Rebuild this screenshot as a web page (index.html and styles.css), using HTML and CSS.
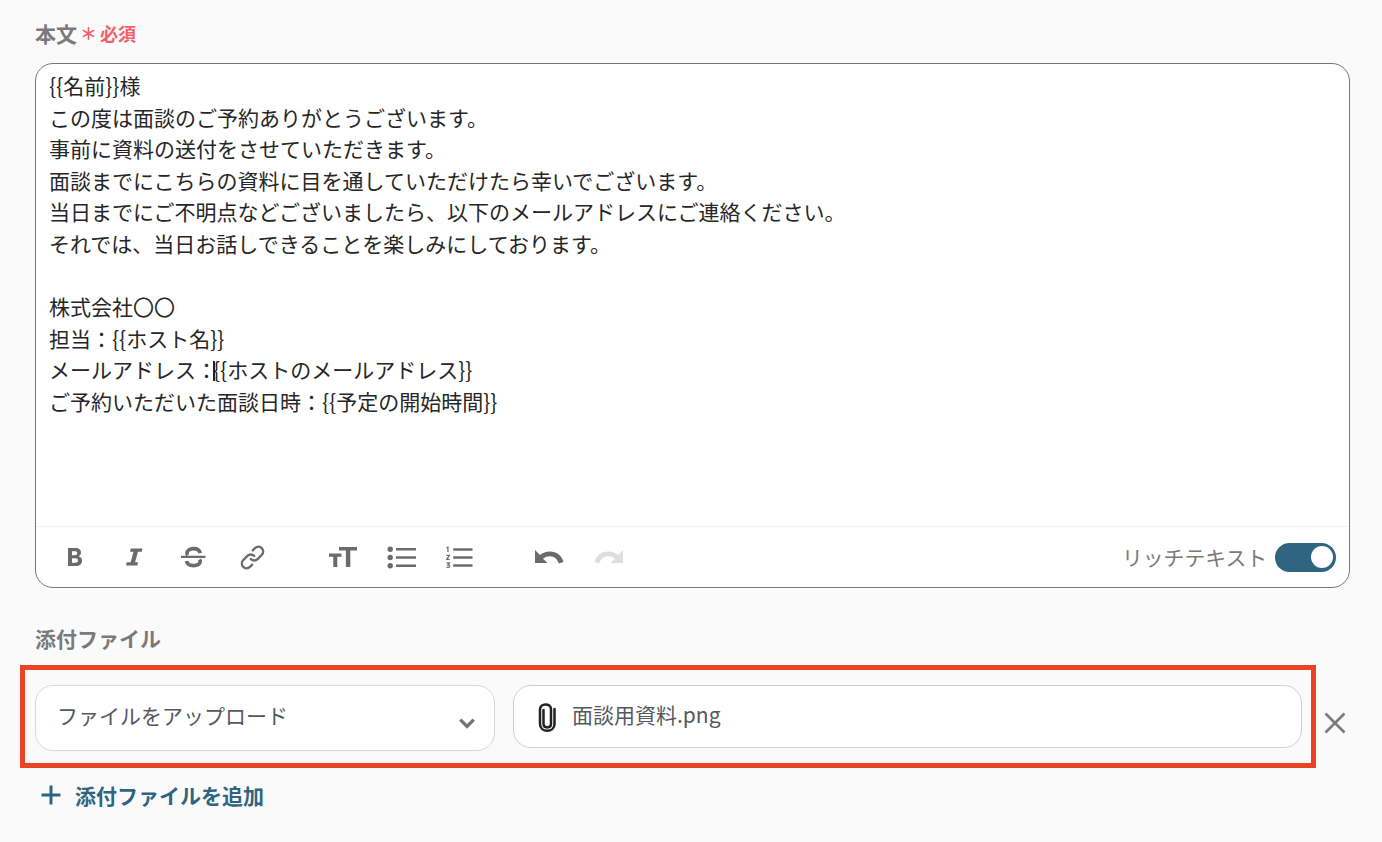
FILE: index.html
```html
<!DOCTYPE html>
<html lang="ja">
<head>
<meta charset="utf-8">
<title>本文</title>
<link rel="stylesheet" href="styles.css">
</head>
<body>
<main class="form">
  <div class="label-row">
    <span class="label">本文</span>
    <span class="asterisk">＊</span>
    <span class="required">必須</span>
  </div>
  <section class="editor">
    <div class="editor-body">
      <p>{{名前}}様</p>
      <p>この度は面談のご予約ありがとうございます。</p>
      <p>事前に資料の送付をさせていただきます。</p>
      <p>面談までにこちらの資料に目を通していただけたら幸いでございます。</p>
      <p>当日までにご不明点などございましたら、以下のメールアドレスにご連絡ください。</p>
      <p>それでは、当日お話しできることを楽しみにしております。</p>
      <p>&nbsp;</p>
      <p>株式会社〇〇</p>
      <p>担当：{{ホスト名}}</p>
      <p>メールアドレス：<span class="caret"></span>{{ホストのメールアドレス}}</p>
      <p>ご予約いただいた面談日時：{{予定の開始時間}}</p>
    </div>
    <div class="toolbar">
      <div class="tools">
        <svg class="tool tool-b" viewBox="0 0 16 20"><path d="M1 1h7.500c3.400 0 5.500 1.700 5.500 4.600 0 1.700-.9 3-2.300 3.700 2 .6 3.300 2.200 3.300 4.400C15 16.900 12.700 19 9 19H1zM5 4.300v3.900h3c1.400 0 2.200-.7 2.200-2s-.8-1.900-2.200-1.900zM5 11.300v4.400h3.500c1.600 0 2.500-.8 2.500-2.200s-.9-2.200-2.500-2.200z" fill="#6b6b6b" fill-rule="evenodd"/></svg>
        <svg class="tool tool-i" viewBox="0 0 18 20"><path d="M5 1h12.500l-.8 3.500h-4L9.600 15.500h3.200l-.8 3.500H0l.8-3.500h4.100L8 4.500H4.200z" fill="#6b6b6b"/></svg>
        <svg class="tool tool-s" viewBox="0 0 26 22"><path d="M0 9.700h25.500v2.300H0z" fill="#6b6b6b"/><path d="M20 7C19.300 4 16.500 2.300 13 2.300 9 2.300 6.300 4.200 6.300 7c0 .9.200 1.600.7 2.200M19.300 13.500c.4.600.7 1.300.7 2 0 2.700-2.800 4.400-7 4.400-3.900 0-6.700-1.600-7.200-4.700" fill="none" stroke="#6b6b6b" stroke-width="3.800"/></svg>
        <svg class="tool tool-link" viewBox="0 0 24 24"><g fill="none" stroke="#6b6b6b" stroke-width="2.300" stroke-linecap="round"><path d="M10.500 13.500a4.500 4.500 0 0 0 6.400 0l4.100-4.100a4.600 4.600 0 0 0-6.500-6.500l-2.200 2.200"/><path d="M13.500 10.500a4.500 4.500 0 0 0-6.400 0L3 14.600a4.600 4.600 0 0 0 6.500 6.500l2.200-2.200"/></g></svg>
      </div>
      <div class="tools tools-list">
        <svg class="tool tool-t" viewBox="0 0 28 22"><path d="M10 1h18v3.600h-6.700V21h-4.400V4.600H10zM0 7.500h12.500v3.200H8.300V21H4.300V10.700H0z" fill="#6b6b6b"/></svg>
        <svg class="tool tool-ul" viewBox="0 0 29 23"><g fill="#6b6b6b"><circle cx="3.200" cy="3.200" r="2.700"/><circle cx="3.200" cy="11.500" r="2.700"/><circle cx="3.200" cy="19.800" r="2.700"/><path d="M9 2h20v2.400H9zM9 10.300h20v2.400H9zM9 18.600h20v2.400H9z"/></g></svg>
        <svg class="tool tool-ol" viewBox="0 0 28 23"><g fill="#6b6b6b"><path d="M7.500 2h20v2.400h-20zM7.500 10.300h20v2.400h-20zM7.500 18.600h20v2.400h-20z"/></g><g fill="none" stroke="#6b6b6b" stroke-width="1.300"><path d="M.5 1.400 2 .8v5"/><path d="M.4 9.300h3.200L.6 13.500h3.200"/><path d="M.5 17.200h3l-1.600 2c1.300 0 1.900.4 1.900 1.300 0 1.500-2.500 1.500-3.300.7"/></g></svg>
      </div>
      <div class="tools tools-history">
        <svg class="tool tool-undo" viewBox="0 0 29 14"><path d="M0 0v13h12.500L8 8.700C10 7 12 6.200 14.800 6.200c4.300 0 7.700 2.800 9 7.300l4.700-1.500C26.700 5.300 21.500 1.500 14.800 1.500c-3.900 0-7.200 1.400-9.800 3.600z" fill="#6b6b6b"/></svg>
        <svg class="tool tool-redo" viewBox="0 0 29 14"><path d="M29 0v13H16.500L21 8.700C19 7 17 6.200 14.200 6.200c-4.300 0-7.700 2.800-9 7.300L.5 12C2.300 5.300 7.500 1.500 14.200 1.500c3.900 0 7.200 1.400 9.800 3.600z" fill="#dedede"/></svg>
      </div>
      <div class="rich">
        <span class="rich-label">リッチテキスト</span>
        <span class="switch"><span class="knob"></span></span>
      </div>
    </div>
  </section>
  <h2 class="label attach-label">添付ファイル</h2>
  <div class="attach-row">
    <div class="select">
      <span class="field-text">ファイルをアップロード</span>
      <svg class="chevron" viewBox="0 0 16 10"><path d="M2 2l6 6 6-6" fill="none" stroke="#757575" stroke-width="3"/></svg>
    </div>
    <div class="file">
      <svg class="clip" viewBox="0 0 20 30"><path d="M6.500 8v14c0 4.500 7.500 4.500 7.500 0V7C14 .8 3 .8 3 7.500V22c0 9 14.500 9 14.500 0V7" fill="none" stroke="#222" stroke-width="2.500" stroke-linecap="round"/></svg>
      <span class="field-text">面談用資料.png</span>
    </div>
    <svg class="remove" viewBox="0 0 22 22"><path d="M1.500 1.500l19 19M20.500 1.500l-19 19" fill="none" stroke="#7b7b7b" stroke-width="2.600"/></svg>
    <div class="highlight"></div>
  </div>
  <div class="add">
    <svg class="plus" viewBox="0 0 20 20"><path d="M10 .5v19M.5 10h19" fill="none" stroke="#2f6580" stroke-width="3"/></svg>
    <span>添付ファイルを追加</span>
  </div>
</main>
</body>
</html>
```
FILE: styles.css
```css
* { box-sizing: border-box; }
html, body { margin: 0; padding: 0; }
body {
  width: 1382px;
  height: 842px;
  overflow: hidden;
  background: #fafafa;
  font-family: "Noto Sans CJK JP", "Noto Sans", sans-serif;
}
.form { padding: 19px 32px 0 35px; }
.label-row { display: flex; align-items: center; height: 28px; gap: 3px; }
.label { font-size: 21px; font-weight: 700; color: #7a7a7a; line-height: 28px; margin: 0; }
.asterisk { color: #f2606a; font-size: 17px; font-weight: 700; line-height: 28px; }
.required { color: #f2606a; font-size: 18px; font-weight: 700; line-height: 28px; }
.editor {
  margin-top: 16px;
  width: 1315px;
  height: 525px;
  background: #fff;
  border: 1px solid #767676;
  border-radius: 18px;
  display: flex;
  flex-direction: column;
}
.editor-body { flex: 1; padding: 6px 13px; color: #262626; font-size: 21px; line-height: 31.6px; }
.editor-body p { margin: 0; white-space: nowrap; }
.caret { display: inline-block; width: 2px; height: 20px; background: #222; vertical-align: -3px; margin: 0 -2px 0 -4px; }
.toolbar {
  height: 61px;
  border-top: 1px solid #f2f2f2;
  display: flex;
  align-items: center;
  padding: 0 13px 0 31px;
}
.tools { display: flex; align-items: center; gap: 0; }
.tool { display: block; flex: none; }
.tool-b { width: 16px; height: 20px; }
.tool-i { width: 17px; height: 20px; margin-left: 43px; }
.tool-s { width: 25px; height: 22px; margin-left: 38px; }
.tool-link { width: 25px; height: 25px; margin-left: 34px; }
.tools-list { margin-left: 64px; }
.tool-t { width: 28px; height: 22px; }
.tool-ul { width: 29px; height: 23px; margin-left: 30px; }
.tool-ol { width: 27px; height: 23px; margin-left: 30px; }
.tools-history { margin-left: 62px; }
.tool-undo { width: 29px; height: 14px; }
.tool-redo { width: 29px; height: 14px; margin-left: 30px; }
.rich { margin-left: auto; display: flex; align-items: center; gap: 8px; }
.rich-label { color: #7a7a7a; font-size: 20.8px; }
.switch { width: 61px; height: 29px; border-radius: 15px; background: #2f6580; display: flex; justify-content: flex-end; align-items: center; padding-right: 3px; }
.knob { width: 22px; height: 22px; border-radius: 50%; background: #fff; }
.attach-label { margin-top: 36px; }
.attach-row { position: relative; margin-top: 33px; display: flex; align-items: flex-start; width: 1315px; height: 66px; }
.select {
  width: 460px;
  height: 66px;
  background: #fff;
  border: 1px solid #d5d8df;
  border-radius: 18px;
  display: flex;
  align-items: center;
  justify-content: space-between;
  padding: 0 18px 0 21px;
  color: #55585e;
  font-size: 21px;
}
.field-text { padding-bottom: 6px; }
.chevron { width: 18px; height: 12px; margin-top: 9px; }
.file {
  margin-left: 18px;
  width: 789px;
  height: 63px;
  background: #fff;
  border: 1px solid #cfcfcf;
  border-radius: 18px;
  display: flex;
  align-items: center;
  padding-left: 23px;
  color: #55585e;
  font-size: 21px;
  gap: 15px;
}
.clip { width: 20px; height: 30px; }
.remove { width: 22px; height: 22px; margin: 27px 0 0 22px; }
.highlight { position: absolute; left: -15px; top: -20px; width: 1296px; height: 103px; border: 5px solid #ea4426; pointer-events: none; }
.add { display: flex; align-items: center; margin-top: 29px; margin-left: 6px; color: #2f6580; font-size: 21px; font-weight: 700; gap: 14px; line-height: 30px; }
.plus { width: 20px; height: 20px; }
```
